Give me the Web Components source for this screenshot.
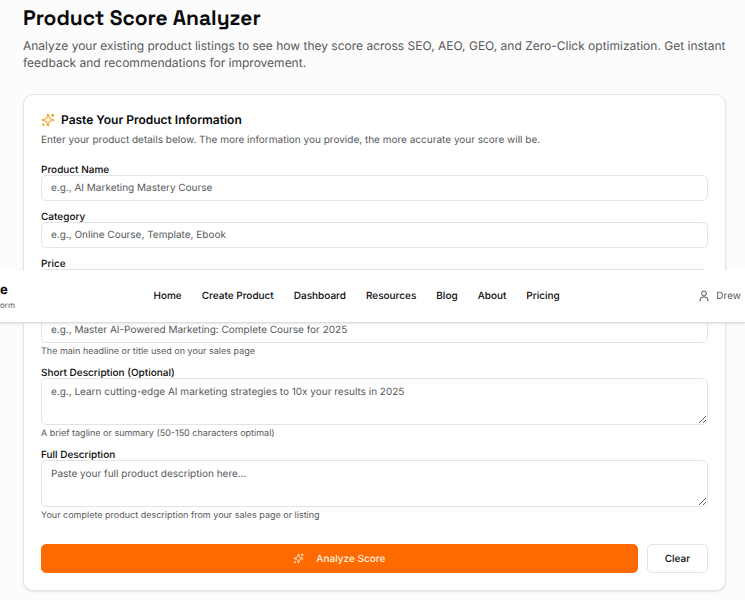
<!DOCTYPE html>
<html lang="en">
<head>
<meta charset="utf-8">
<meta name="viewport" content="width=device-width, initial-scale=1">
<title>Product Score Analyzer</title>
<style>
:root{--ink:#0a0a0c;--muted:#58595b;--line:#e3e4e5;--orange:#ff6a00;--amber:#eda321}
*{box-sizing:border-box}
html{background:#fcfcfc}
body{margin:0;color:var(--ink);font:10px/16px Inter,"Liberation Sans",sans-serif;text-rendering:geometricPrecision;overflow:hidden}
</style>
</head>
<body>
<analyzer-page>
  <site-header slot="header"></site-header>
  <page-intro heading="Product Score Analyzer">Analyze your existing product listings to see how they score across SEO, AEO, GEO, and Zero-Click optimization. Get instant feedback and recommendations for improvement.</page-intro>
  <form-card heading="Paste Your Product Information">
    <span slot="summary">Enter your product details below. The more information you provide, the more accurate your score will be.</span>
    <field-group>
      <text-field label="Product Name" placeholder="e.g., AI Marketing Mastery Course"></text-field>
      <text-field label="Category" placeholder="e.g., Online Course, Template, Ebook"></text-field>
      <text-field label="Price"></text-field>
    </field-group>
    <field-group>
      <text-field label="Headline" placeholder="e.g., Master AI-Powered Marketing: Complete Course for 2025">The main headline or title used on your sales page</text-field>
      <text-field multiline label="Short Description (Optional)" placeholder="e.g., Learn cutting-edge AI marketing strategies to 10x your results in 2025">A brief tagline or summary (50-150 characters optimal)</text-field>
      <text-field multiline label="Full Description" placeholder="Paste your full product description here...">Your complete product description from your sales page or listing</text-field>
    </field-group>
    <action-button slot="actions" primary><sparkle-icon></sparkle-icon>Analyze Score</action-button>
    <action-button slot="actions">Clear</action-button>
  </form-card>
</analyzer-page>
<script>
const define = (name, render) => customElements.define(name, class extends HTMLElement {
  constructor() {
    super();
    this.attachShadow({ mode: "open" });
  }
  connectedCallback() {
    this.shadowRoot.innerHTML = "<style>*{box-sizing:border-box}:host{display:block}</style>" + render(this);
  }
});

define("analyzer-page", () => `
<style>
:host{position:relative;padding:5px 19px 9px 23px}
.header{position:absolute;top:270px;left:0;right:0;z-index:1}
</style>
<div class="header"><slot name="header"></slot></div>
<main><slot></slot></main>`);

define("site-header", () => `
<style>
header{display:flex;justify-content:space-between;align-items:center;height:53px;padding-right:4px;background:#fff;border-bottom:1px solid #dcdddd;box-shadow:0 1px 2px #0000001a}
.brand{display:flex;flex-direction:column;white-space:nowrap;color:inherit;text-decoration:none}
.brand strong{font-size:13px;font-weight:700;line-height:17px}
.brand span{font-size:8px;line-height:12px;color:var(--muted)}
nav{display:flex;gap:20px}
nav a{color:inherit;text-decoration:none;font-weight:500}
.user{display:flex;align-items:center;gap:6px;color:var(--muted);text-decoration:none}
svg{width:12px;height:12px;fill:none;stroke:currentColor;stroke-width:2;stroke-linecap:round;stroke-linejoin:round}
</style>
<header>
  <a class="brand" href="#"><strong>e</strong><span>orm</span></a>
  <nav><a href="#">Home</a><a href="#">Create Product</a><a href="#">Dashboard</a><a href="#">Resources</a><a href="#">Blog</a><a href="#">About</a><a href="#">Pricing</a></nav>
  <a class="user" href="#"><svg viewBox="0 0 24 24" aria-hidden="true"><circle cx="12" cy="7" r="5"/><path d="M4 22v-2a6 6 0 0 1 6-6h4a6 6 0 0 1 6 6v2"/></svg>Drew</a>
</header>`);

define("page-intro", el => `
<style>
h1{margin:0;font:600 21px/28px "Space Grotesk",Inter,sans-serif}
p{margin:4px 0 0;font-size:12px;line-height:17px;color:var(--muted)}
</style>
<h1>${el.getAttribute("heading")}</h1><p><slot></slot></p>`);

define("sparkle-icon", () => `
<style>
:host{display:inline-flex}
svg{width:var(--icon,11px);height:var(--icon,11px);fill:none;stroke:currentColor;stroke-width:2;stroke-linecap:round;stroke-linejoin:round}
</style>
<svg viewBox="0 0 24 24" aria-hidden="true"><path d="M9.94 15.5A2 2 0 0 0 8.5 14.06l-6.14-1.58a.5.5 0 0 1 0-.96L8.5 9.94A2 2 0 0 0 9.94 8.5l1.58-6.14a.5.5 0 0 1 .96 0l1.58 6.14a2 2 0 0 0 1.44 1.44l6.14 1.58a.5.5 0 0 1 0 .96l-6.14 1.58a2 2 0 0 0-1.44 1.44l-1.58 6.14a.5.5 0 0 1-.96 0z"/><path d="M20 2v4M22 4h-4"/><circle cx="4" cy="20" r="1"/></svg>`);

define("form-card", el => `
<style>
:host{margin-top:23px;padding:16px 17px 17px;background:#fff;border:1px solid var(--line);border-radius:10px;box-shadow:0 1px 2px #0000001a}
h2{display:flex;align-items:center;gap:6px;margin:0;font-size:12px;line-height:18px;font-weight:600}
sparkle-icon{--icon:14px;color:var(--amber)}
p{margin:3px 0 15px;color:var(--muted)}
form{display:flex;flex-direction:column;gap:10px}
.actions{display:flex;gap:9px;margin-top:13px}
</style>
<h2><sparkle-icon></sparkle-icon>${el.getAttribute("heading")}</h2>
<p><slot name="summary"></slot></p>
<form><slot></slot><div class="actions"><slot name="actions"></slot></div></form>`);

define("field-group", () => `
<style>:host{display:flex;flex-direction:column;gap:9px}</style><slot></slot>`);

define("text-field", el => {
  const hint = el.getAttribute("placeholder") || "";
  return `
<style>
:host{display:flex;flex-direction:column}
label{padding-top:2px;line-height:10px;font-weight:500}
input,textarea{display:block;width:100%;margin:0;padding:0 9px;border:1px solid var(--line);border-radius:5px;background:#fff;color:inherit;font:inherit;text-rendering:inherit;outline-color:var(--orange)}
input{height:26px}
textarea{height:47px;padding-top:5px;resize:vertical}
::placeholder{color:var(--muted);opacity:1}
small{margin-top:4px;font-size:9px;line-height:10px;color:var(--muted)}
</style>
<label for="control">${el.getAttribute("label")}</label>
${el.hasAttribute("multiline") ? `<textarea id="control" placeholder="${hint}"></textarea>` : `<input id="control" type="text" placeholder="${hint}">`}
${el.textContent.trim() ? "<small><slot></slot></small>" : ""}`;
});

define("action-button", el => `
<style>
:host([primary]){flex:1}
button{display:flex;align-items:center;justify-content:center;gap:12px;width:100%;height:29px;padding:0 17px;border:1px solid var(--line);border-radius:5px;background:#fff;color:inherit;font:inherit;text-rendering:inherit;font-weight:500;cursor:pointer}
:host([primary]) button{border-color:var(--orange);background:var(--orange);color:#fff3e2}
</style>
<button type="button"><slot></slot></button>`);
</script>
</body>
</html>
